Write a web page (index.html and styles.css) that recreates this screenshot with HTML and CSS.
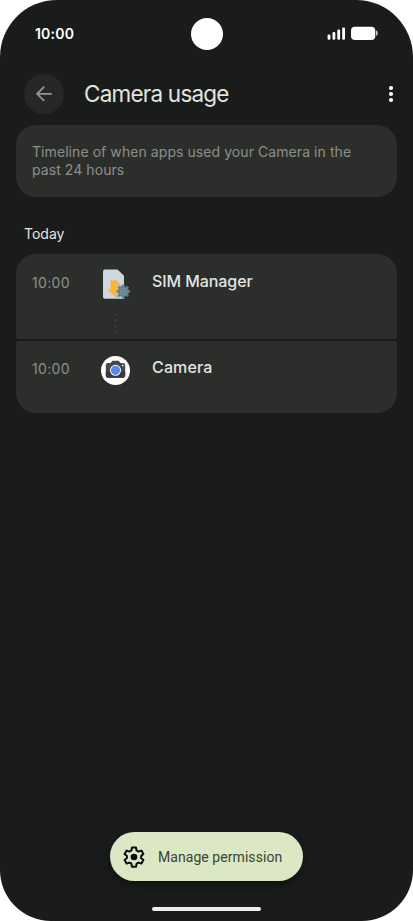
FILE: index.html
```html
<!DOCTYPE html>
<html lang="en">
<head>
<meta charset="utf-8">
<title>Camera usage</title>
<link rel="stylesheet" href="styles.css">
</head>
<body>
<main class="phone">
  <div class="status">
    <span class="clock">10:00</span>
    <span class="lens"></span>
    <svg class="signals" width="52" height="16" viewBox="0 0 52 16" fill="#fff">
      <rect x=".6" y="8.400" width="2.800" height="5.300" rx="1.200"/><rect x="5.500" y="6" width="2.800" height="7.700" rx="1.200"/><rect x="10.300" y="3.500" width="2.800" height="10.200" rx="1.200"/><rect x="15.200" y="1.400" width="2.800" height="12.300" rx="1.200"/>
      <rect x="24" y=".7" width="24.300" height="13.300" rx="4"/><path d="M49 4.300q1.700.4 1.700 2.800T49 10z" opacity=".8"/>
    </svg>
  </div>
  <header class="bar">
    <span class="back"><svg width="40" height="40" viewBox="0 0 40 40" fill="none" stroke="#929491" stroke-width="1.8"><path d="M27.800 19.800H13.200M20.200 12.700l-7.100 7.100 7.100 7.100"/></svg></span>
    <h1>Camera usage</h1>
    <svg class="more" width="6" height="18" viewBox="0 0 6 18" fill="#fff"><circle cx="3" cy="3" r="2.1"/><circle cx="3" cy="9" r="2.1"/><circle cx="3" cy="15" r="2.1"/></svg>
  </header>
  <p class="intro">Timeline of when apps used your Camera in the<br>past 24 hours</p>
  <h2>Today</h2>
  <section class="list">
    <article class="entry first">
      <time>10:00</time>
      <div class="icon">
        <svg width="30" height="70" viewBox="0 0 30 70">
          <path d="M4 .5h12.500L23 6.800V28q0 1.800-1.800 1.800H4Q2 29.800 2 28V2.500Q2 .5 4 .5z" fill="#cfd8dc"/>
          <path d="M15.500 11.500 23 18.500V29.800H16l-4-4z" fill="#b3bec2"/>
          <path d="M9.500 11.300h6.500v9.300h3.300L12.700 26.700 6.200 20.600h3.300z" fill="#f7b640"/>
          <g transform="translate(22.400 22.400)"><g fill="#607d8b"><circle r="5"/><path id="tooth" d="M-1.200-6.800h2.400l.6 2.800h-3.600z"/><use href="#tooth" transform="rotate(45)"/><use href="#tooth" transform="rotate(90)"/><use href="#tooth" transform="rotate(135)"/><use href="#tooth" transform="rotate(180)"/><use href="#tooth" transform="rotate(225)"/><use href="#tooth" transform="rotate(270)"/><use href="#tooth" transform="rotate(315)"/></g><circle r="3.300" fill="none" stroke="#8398a3" stroke-width=".9"/><circle r="1.700" fill="#748d99"/></g>
          <g fill="#464845"><circle cx="14.500" cy="45.500" r="1"/><circle cx="14.500" cy="51.500" r="1"/><circle cx="14.500" cy="57.500" r="1"/><circle cx="14.500" cy="63.500" r="1"/></g>
        </svg>
      </div>
      <h3 class="sim">SIM Manager</h3>
    </article>
    <article class="entry last">
      <time>10:00</time>
      <div class="icon">
        <svg width="30" height="30" viewBox="0 0 30 30">
          <circle cx="14.500" cy="15.500" r="14.500" fill="#fff"/>
          <path d="M7 7.900h2.800L11.300 5.800h6.500l1.500 2.100H22q2.200 0 2.200 2.200V20.500q0 2.200-2.200 2.200H7Q4.800 22.700 4.800 20.500V10.100Q4.800 7.900 7 7.900z" fill="#46464e"/>
          <path d="M4.800 17h19.400v3.500q0 2.200-2.200 2.200H7Q4.800 22.700 4.800 20.500z" fill="#393941"/>
          <circle cx="14.500" cy="15.300" r="5.500" fill="#fff"/><circle cx="14.500" cy="15.300" r="4.600" fill="#5989e8"/><circle cx="21.700" cy="10.400" r=".9" fill="#e4e4e8"/>
        </svg>
      </div>
      <h3 class="cam">Camera</h3>
    </article>
  </section>
  <button class="manage">
    <svg width="24" height="24" viewBox="0 0 24 24"><path d="M10 2.500h4l.6 3 1.900 1.100 2.900-1 2 3.500-2.300 2v2l2.300 2-2 3.500-2.900-1-1.900 1.100-.6 3h-4l-.6-3-1.900-1.100-2.900 1-2-3.500 2.300-2v-2l-2.300-2 2-3.500 2.900 1 1.900-1.100z" fill="none" stroke="#080b06" stroke-width="2" stroke-linejoin="round"/><circle cx="12" cy="12" r="3.300" fill="#080b06"/></svg>
    <span>Manage permission</span>
  </button>
  <div class="home"></div>
</main>
</body>
</html>
```
FILE: styles.css
```css
* { box-sizing: border-box; }
body { margin: 0; background: #fff; }
h1, h2, h3, p { margin: 0; font-weight: 400; }
svg { display: block; }
.phone {
  width: 413px; height: 921px; overflow: hidden;
  display: flex; flex-direction: column;
  border-radius: 57px 57px 51px 51px;
  background: #1a1c1b; color: #e3e4e1;
  font-family: Inter, sans-serif;
}
.status {
  height: 67px; flex: none; padding: 0 34px 0 35px;
  display: grid; grid-template-columns: 1fr 32px 1fr; align-items: center;
}
.clock { font-size: 14px; font-weight: 600; color: #fff; line-height: 20px; letter-spacing: .2px; }
.lens { width: 32px; height: 32px; border-radius: 50%; background: #fff; }
.signals { justify-self: end; }
.bar { height: 52px; flex: none; margin-top: 1px; padding: 0 19px 0 24px; display: flex; align-items: center; }
.back { width: 40px; height: 40px; border-radius: 50%; background: #262827; }
.bar h1 { margin-left: 20px; font-size: 22.5px; line-height: 32px; letter-spacing: -.78px; white-space: nowrap; }
.more { margin-left: auto; }
.intro {
  height: 72px; flex: none; margin: 5px 16px 0; padding: 18px 16px;
  border-radius: 20px; background: #2c2e2c; color: #8c8e8b;
  font-size: 14px; line-height: 18px; letter-spacing: .07px; white-space: nowrap;
}
.phone h2 { margin: 27px 0 0 24px; font-size: 14px; line-height: 20px; }
.list { margin: 10px 16px 0; display: flex; flex-direction: column; gap: 2px; }
.entry { display: grid; grid-template-columns: 69px 51px 1fr; padding: 0 16px; background: #2c2e2c; }
.first { height: 84.5px; border-radius: 20px 20px 3px 3px; padding-top: 15px; }
.last { height: 72.5px; border-radius: 3px 3px 20px 20px; padding-top: 14.5px; }
.entry time { font-size: 14px; line-height: 28px; letter-spacing: .35px; color: #8c8e8b; }
.entry h3 { font-size: 16px; line-height: 24px; font-weight: 500; }
.sim { letter-spacing: -.08px; }
.cam { letter-spacing: .15px; }
.manage {
  width: 193px; height: 49px; margin: auto auto 0; padding: 0 0 0 12px;
  display: flex; align-items: center; gap: 12px;
  border: 0; border-radius: 25px; background: #dce7c5; color: #3b4234;
  font: 14px/20px Roboto, sans-serif; letter-spacing: .06px; white-space: nowrap;
  box-shadow: 0 4px 8px #0006;
}
.home { width: 109px; height: 4px; flex: none; margin: 26px auto 10px; border-radius: 2px; background: #edeeed; }
```
